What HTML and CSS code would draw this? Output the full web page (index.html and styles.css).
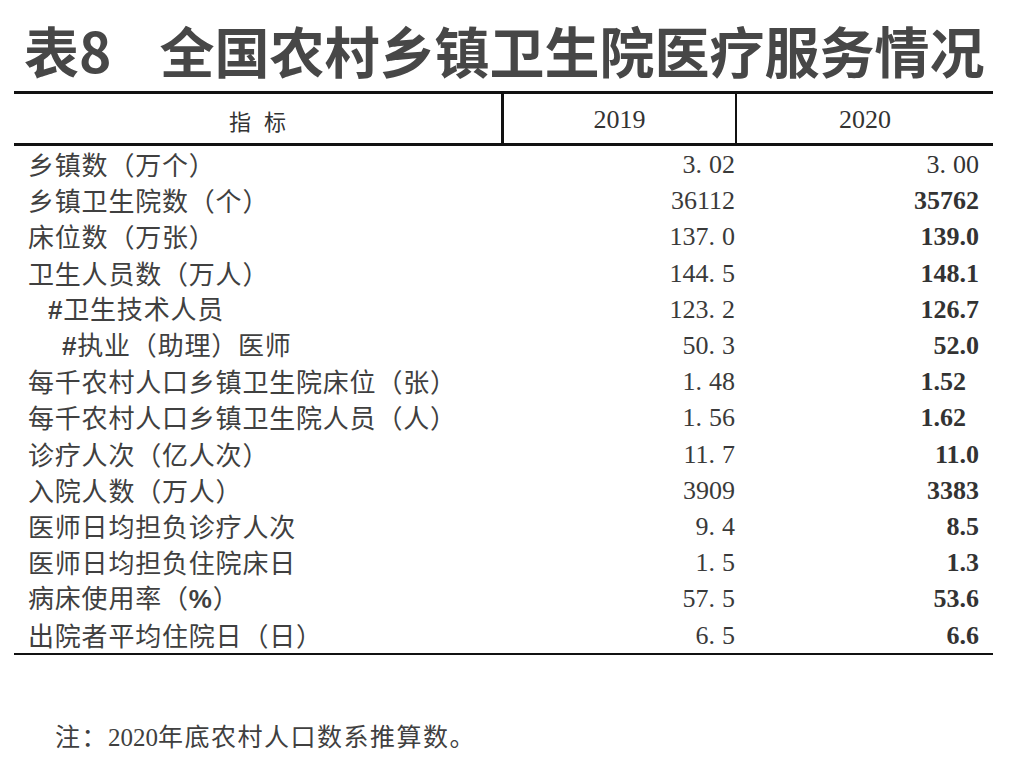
FILE: index.html
```html
<!DOCTYPE html>
<html lang="zh-CN">
<head>
<meta charset="utf-8">
<title>表8 全国农村乡镇卫生院医疗服务情况</title>
<link rel="stylesheet" href="styles.css">
</head>
<body>
<div class="page">
  <h1 class="title">表8<span class="gap">　</span>全国农村乡镇卫生院医疗服务情况</h1>
  <div class="table">
    <div class="head">
      <div class="hcell hlabel">指 标</div>
      <div class="hcell hyear sep1">2019</div>
      <div class="hcell hyear sep2">2020</div>
    </div>
    <div class="body">
      <div class="row"><div class="label">乡镇数（万个）</div><div class="v19">3<span class="pt">.</span>02</div><div class="v20 reg">3<span class="pt">.</span>00</div></div>
      <div class="row"><div class="label">乡镇卫生院数（个）</div><div class="v19">36112</div><div class="v20">35762</div></div>
      <div class="row"><div class="label">床位数（万张）</div><div class="v19">137<span class="pt">.</span>0</div><div class="v20">139.0</div></div>
      <div class="row"><div class="label">卫生人员数（万人）</div><div class="v19">144<span class="pt">.</span>5</div><div class="v20">148.1</div></div>
      <div class="row"><div class="label ind1"><span class="hash">#</span>卫生技术人员</div><div class="v19">123<span class="pt">.</span>2</div><div class="v20">126.7</div></div>
      <div class="row"><div class="label ind2"><span class="hash">#</span>执业（助理）医师</div><div class="v19">50<span class="pt">.</span>3</div><div class="v20">52.0</div></div>
      <div class="row"><div class="label">每千农村人口乡镇卫生院床位（张）</div><div class="v19">1<span class="pt">.</span>48</div><div class="v20 short">1.52</div></div>
      <div class="row"><div class="label">每千农村人口乡镇卫生院人员（人）</div><div class="v19">1<span class="pt">.</span>56</div><div class="v20 short">1.62</div></div>
      <div class="row"><div class="label">诊疗人次（亿人次）</div><div class="v19">11<span class="pt">.</span>7</div><div class="v20">11.0</div></div>
      <div class="row"><div class="label">入院人数（万人）</div><div class="v19">3909</div><div class="v20">3383</div></div>
      <div class="row"><div class="label">医师日均担负诊疗人次</div><div class="v19">9<span class="pt">.</span>4</div><div class="v20">8.5</div></div>
      <div class="row"><div class="label">医师日均担负住院床日</div><div class="v19">1<span class="pt">.</span>5</div><div class="v20">1.3</div></div>
      <div class="row"><div class="label">病床使用率（<span class="pct">%</span>）</div><div class="v19">57<span class="pt">.</span>5</div><div class="v20">53.6</div></div>
      <div class="row"><div class="label">出院者平均住院日（日）</div><div class="v19">6<span class="pt">.</span>5</div><div class="v20">6.6</div></div>
    </div>
  </div>
  <p class="note">注：<span class="nd">2020</span>年底农村人口数系推算数。</p>
</div>
</body>
</html>
```

FILE: styles.css
```css
html, body {
  margin: 0;
  padding: 0;
  background: #ffffff;
}

.page {
  width: 1023px;
  height: 763px;
  overflow: hidden;
  color: #3a3a3a;
  font-family: "Liberation Serif", "Noto Sans CJK SC", serif;
}

.title {
  margin: 0;
  padding: 22px 0 0 24px;
  height: 55px;
  font-family: "Noto Sans CJK SC", "Noto Sans", sans-serif;
  font-weight: 700;
  font-size: 55px;
  line-height: 55px;
  color: #474747;
  white-space: nowrap;
}

.gap {
  display: inline-block;
  width: 48px;
}

.table {
  margin: 14px 0 0 14px;
  width: 979px;
  border-top: 3px solid #111;
  border-bottom: 2px solid #111;
}

.head {
  display: grid;
  grid-template-columns: 487px 234px 1fr;
  height: 49px;
  border-bottom: 3px solid #111;
}

.hcell {
  display: flex;
  align-items: center;
  justify-content: center;
  font-size: 26px;
  color: #333;
}

.hlabel {
  font-family: "Noto Sans CJK SC", sans-serif;
  font-size: 22px;
  word-spacing: 8px;
  padding-top: 2px;
}

.hyear {
  font-family: "Liberation Serif", serif;
  padding-top: 3px;
}

.sep1 {
  border-left: 3px solid #111;
}

.sep2 {
  border-left: 2px solid #111;
}

.row {
  display: grid;
  grid-template-columns: 488px 233px 1fr;
  height: 36.2px;
  align-items: center;
}

.label {
  padding-left: 14px;
  font-family: "Noto Sans CJK SC", sans-serif;
  font-size: 26px;
  letter-spacing: 0.8px;
  line-height: 1;
  color: #404040;
  white-space: nowrap;
}

.ind1 {
  padding-left: 34px;
}

.ind2 {
  padding-left: 48px;
}

.hash,
.pct {
  font-family: "Liberation Sans", sans-serif;
  font-weight: 700;
}

.v19,
.v20 {
  text-align: right;
  font-family: "Liberation Serif", serif;
  font-size: 26px;
  line-height: 1;
  padding-top: 2px;
}

.v19 {
  color: #3a3a3a;
}

.pt {
  padding-right: 0.27em;
}

.v20 {
  padding-right: 14px;
  font-weight: 700;
  color: #333;
}

.v20.reg {
  font-weight: 400;
}

.v20.short {
  padding-right: 27px;
}

.note {
  margin: 68px 0 0 55px;
  font-family: "Noto Sans CJK SC", sans-serif;
  font-size: 25px;
  line-height: 1;
  color: #404040;
  letter-spacing: 1.5px;
}

.nd {
  font-family: "Liberation Serif", serif;
  letter-spacing: 0;
}
```
